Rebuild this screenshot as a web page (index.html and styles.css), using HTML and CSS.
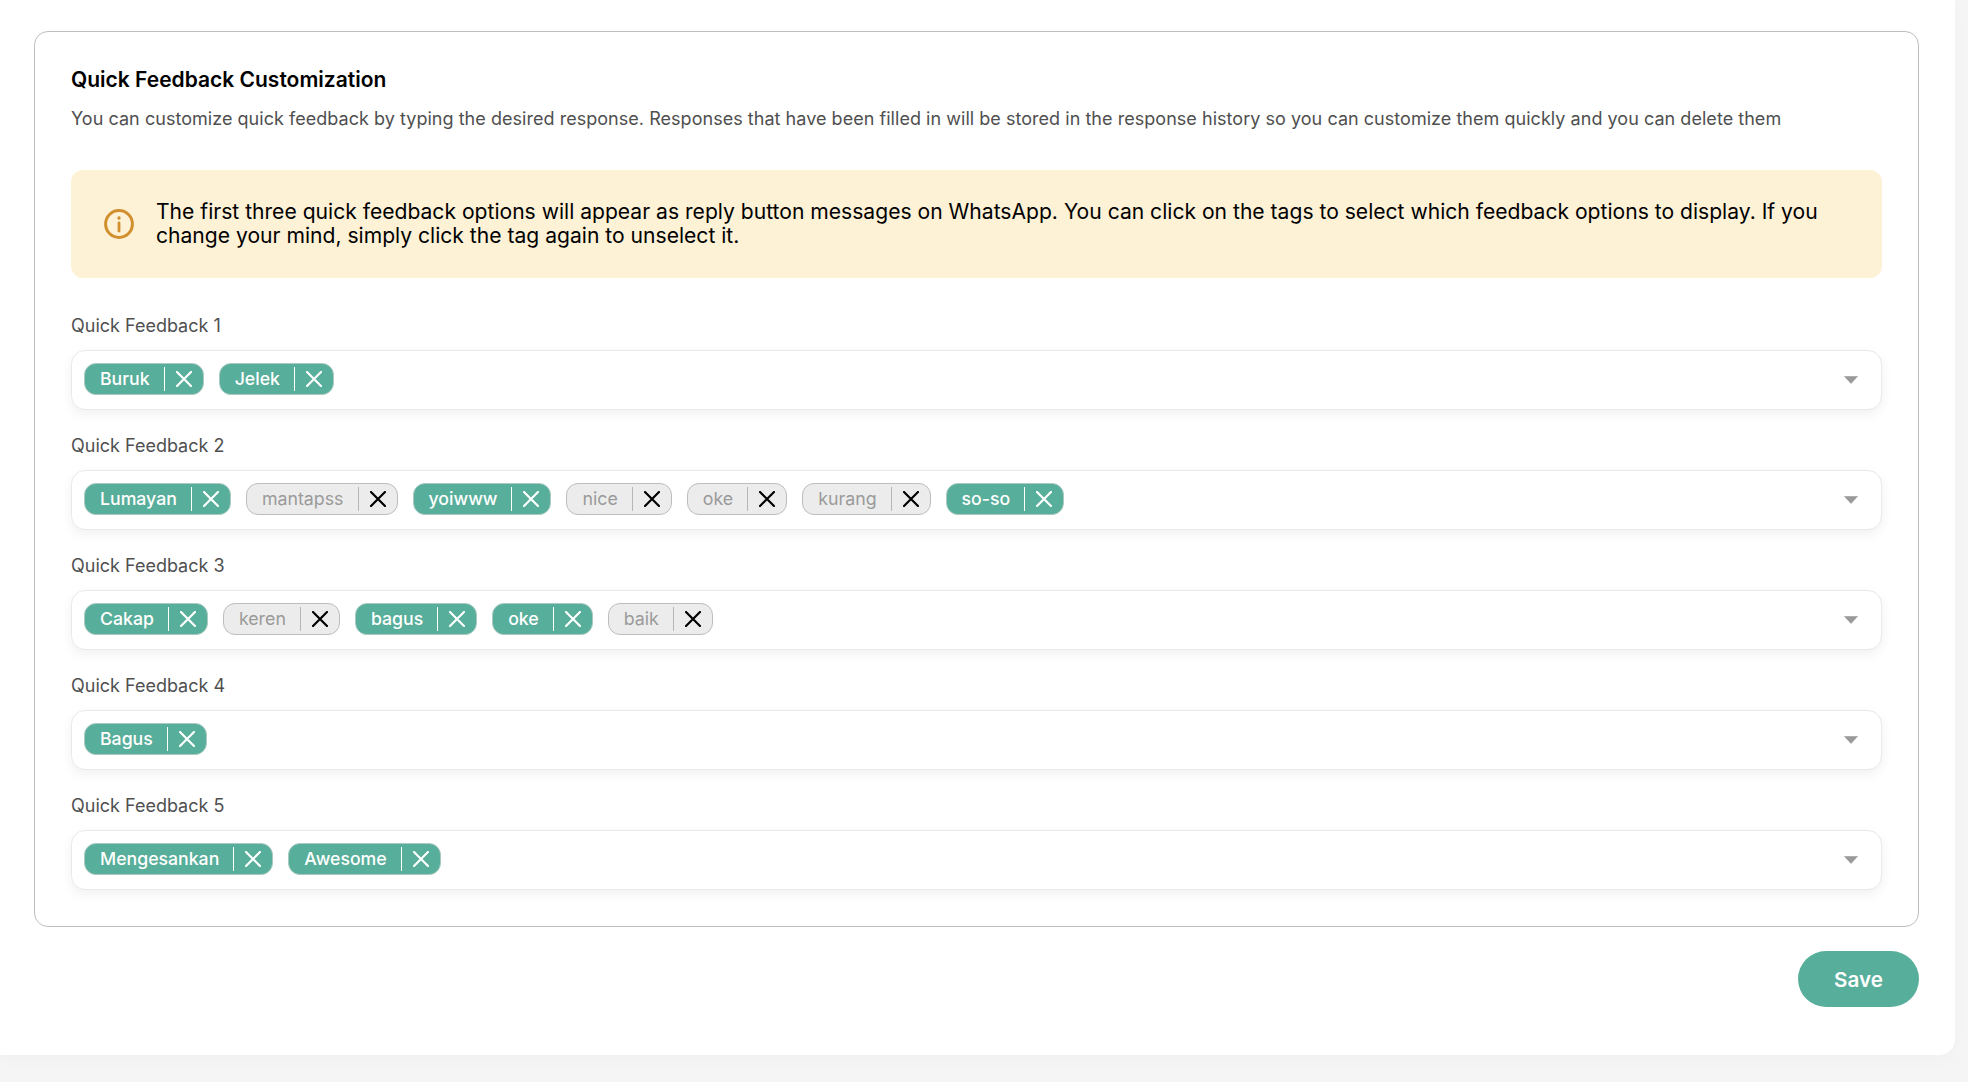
FILE: index.html
```html
<!DOCTYPE html>
<html lang="en">
<head>
<meta charset="utf-8">
<title>Quick Feedback Customization</title>
<link rel="stylesheet" href="styles.css">
</head>
<body>
<svg class="defs" width="0" height="0" aria-hidden="true">
  <defs>
    <symbol id="x" viewBox="0 0 16 16"><path d="M1 1L15 15M15 1L1 15" fill="none" stroke="currentColor" stroke-width="2.2" stroke-linecap="round"/></symbol>
    <symbol id="caret" viewBox="0 0 14 8"><path d="M0.5 0.5H13.5L7 7.5Z" fill="currentColor" stroke="currentColor" stroke-width="0.6" stroke-linejoin="round"/></symbol>
  </defs>
</svg>
<main class="panel">
  <section class="card">
    <h1 class="title">Quick Feedback Customization</h1>
    <p class="desc">You can customize quick feedback by typing the desired response. Responses that have been filled in will be stored in the response history so you can customize them quickly and you can delete them</p>
    <div class="alert">
      <svg class="alert-icon" viewBox="0 0 30 30" aria-hidden="true"><circle cx="15" cy="15" r="13.4" fill="none" stroke="#d18f2e" stroke-width="3"/><path d="M15 14V22" stroke="#d18f2e" stroke-width="2.8" stroke-linecap="round"/><circle cx="15" cy="9" r="1.7" fill="#d18f2e"/></svg>
      <p class="alert-text">The first three quick feedback options will appear as reply button messages on WhatsApp. You can click on the tags to select which feedback options to display. If you change your mind, simply click the tag again to unselect it.</p>
    </div>

    <div class="field">
      <label class="label">Quick Feedback 1</label>
      <div class="select">
        <span class="tag on"><span class="tag-text">Buruk</span><span class="sep"></span><svg class="tag-x"><use href="#x"/></svg></span>
        <span class="tag on"><span class="tag-text">Jelek</span><span class="sep"></span><svg class="tag-x"><use href="#x"/></svg></span>
        <svg class="caret"><use href="#caret"/></svg>
      </div>
    </div>

    <div class="field">
      <label class="label">Quick Feedback 2</label>
      <div class="select">
        <span class="tag on"><span class="tag-text">Lumayan</span><span class="sep"></span><svg class="tag-x"><use href="#x"/></svg></span>
        <span class="tag"><span class="tag-text">mantapss</span><span class="sep"></span><svg class="tag-x"><use href="#x"/></svg></span>
        <span class="tag on"><span class="tag-text">yoiwww</span><span class="sep"></span><svg class="tag-x"><use href="#x"/></svg></span>
        <span class="tag"><span class="tag-text">nice</span><span class="sep"></span><svg class="tag-x"><use href="#x"/></svg></span>
        <span class="tag"><span class="tag-text">oke</span><span class="sep"></span><svg class="tag-x"><use href="#x"/></svg></span>
        <span class="tag"><span class="tag-text">kurang</span><span class="sep"></span><svg class="tag-x"><use href="#x"/></svg></span>
        <span class="tag on"><span class="tag-text">so-so</span><span class="sep"></span><svg class="tag-x"><use href="#x"/></svg></span>
        <svg class="caret"><use href="#caret"/></svg>
      </div>
    </div>

    <div class="field">
      <label class="label">Quick Feedback 3</label>
      <div class="select">
        <span class="tag on"><span class="tag-text">Cakap</span><span class="sep"></span><svg class="tag-x"><use href="#x"/></svg></span>
        <span class="tag"><span class="tag-text">keren</span><span class="sep"></span><svg class="tag-x"><use href="#x"/></svg></span>
        <span class="tag on"><span class="tag-text">bagus</span><span class="sep"></span><svg class="tag-x"><use href="#x"/></svg></span>
        <span class="tag on"><span class="tag-text">oke</span><span class="sep"></span><svg class="tag-x"><use href="#x"/></svg></span>
        <span class="tag"><span class="tag-text">baik</span><span class="sep"></span><svg class="tag-x"><use href="#x"/></svg></span>
        <svg class="caret"><use href="#caret"/></svg>
      </div>
    </div>

    <div class="field">
      <label class="label">Quick Feedback 4</label>
      <div class="select">
        <span class="tag on"><span class="tag-text">Bagus</span><span class="sep"></span><svg class="tag-x"><use href="#x"/></svg></span>
        <svg class="caret"><use href="#caret"/></svg>
      </div>
    </div>

    <div class="field">
      <label class="label">Quick Feedback 5</label>
      <div class="select">
        <span class="tag on"><span class="tag-text">Mengesankan</span><span class="sep"></span><svg class="tag-x"><use href="#x"/></svg></span>
        <span class="tag on"><span class="tag-text">Awesome</span><span class="sep"></span><svg class="tag-x"><use href="#x"/></svg></span>
        <svg class="caret"><use href="#caret"/></svg>
      </div>
    </div>
  </section>
  <div class="actions"><button class="save" type="button">Save</button></div>
</main>
</body>
</html>
```
FILE: styles.css
```css
* { box-sizing: border-box; }
html, body { margin: 0; height: 100%; }
body {
  background: #f5f5f5;
  font-family: Inter, "Liberation Sans", sans-serif;
  overflow: hidden;
}
.defs { display: block; height: 0; }
.panel {
  width: 1955px;
  height: 1055px;
  background: #fff;
  border-radius: 0 0 16px 0;
  padding: 31px 36px 0 34px;
  box-shadow: 0 6px 16px rgba(0,0,0,.02);
}
.card {
  height: 896px;
  border: 1px solid #bdbdbd;
  border-radius: 14px;
  padding: 34px 36px 0;
}
.title {
  margin: 0;
  font-size: 21px;
  line-height: 28px;
  font-weight: 600;
  color: #000;
}
.desc {
  margin: 12px 0 0;
  font-size: 18px;
  line-height: 26px;
  letter-spacing: .036px;
  color: #4f4f4f;
  white-space: nowrap;
}
.alert {
  display: flex;
  align-items: center;
  gap: 22px;
  height: 108px;
  margin-top: 38px;
  padding: 0 33px;
  background: #fdf1d6;
  border-radius: 12px;
}
.alert-icon { width: 30px; height: 30px; flex: none; }
.alert-text {
  margin: 0;
  font-size: 21.1px;
  line-height: 24px;
  color: #000;
}
.field { margin-top: 24px; }
.alert + .field { margin-top: 36px; }
.label {
  display: block;
  font-size: 18px;
  line-height: 24px;
  color: #4f4f4f;
}
.select {
  display: flex;
  align-items: center;
  gap: 15px;
  height: 60px;
  margin-top: 12px;
  padding: 0 23px 0 12px;
  background: #fff;
  border: 1px solid #e9e9e9;
  border-radius: 14px;
  box-shadow: 0 4px 12px rgba(0,0,0,.06);
}
.tag {
  display: flex;
  align-items: center;
  height: 32px;
  margin-top: -3px;
  padding: 0 11px 0 15px;
  border: 1px solid #bdbdbd;
  border-radius: 12px;
  background: #ececec;
  color: #9a9a9a;
  font-size: 17.8px;
  font-weight: 400;
}
.tag.on {
  background: #57ae9a;
  border-color: #a9c9c0;
  color: #fff;
  font-size: 17.7px;
  font-weight: 500;
}
.tag-text { line-height: 22px; }
.sep {
  width: 1px;
  height: 24px;
  margin: 0 11px 0 14px;
  background: #b5b5b5;
}
.tag.on .sep { background: #fff; }
.tag-x { width: 16px; height: 16px; color: #000; }
.tag.on .tag-x { color: #fff; }
.caret {
  width: 14px;
  height: 8px;
  margin-left: auto;
  color: #9a9a9a;
}
.actions {
  display: flex;
  justify-content: flex-end;
  margin-top: 24px;
}
.save {
  width: 121px;
  height: 56px;
  border: 0;
  border-radius: 28px;
  background: #57ae9a;
  color: #fff;
  font: 600 20.6px Inter, "Liberation Sans", sans-serif;
}
```
